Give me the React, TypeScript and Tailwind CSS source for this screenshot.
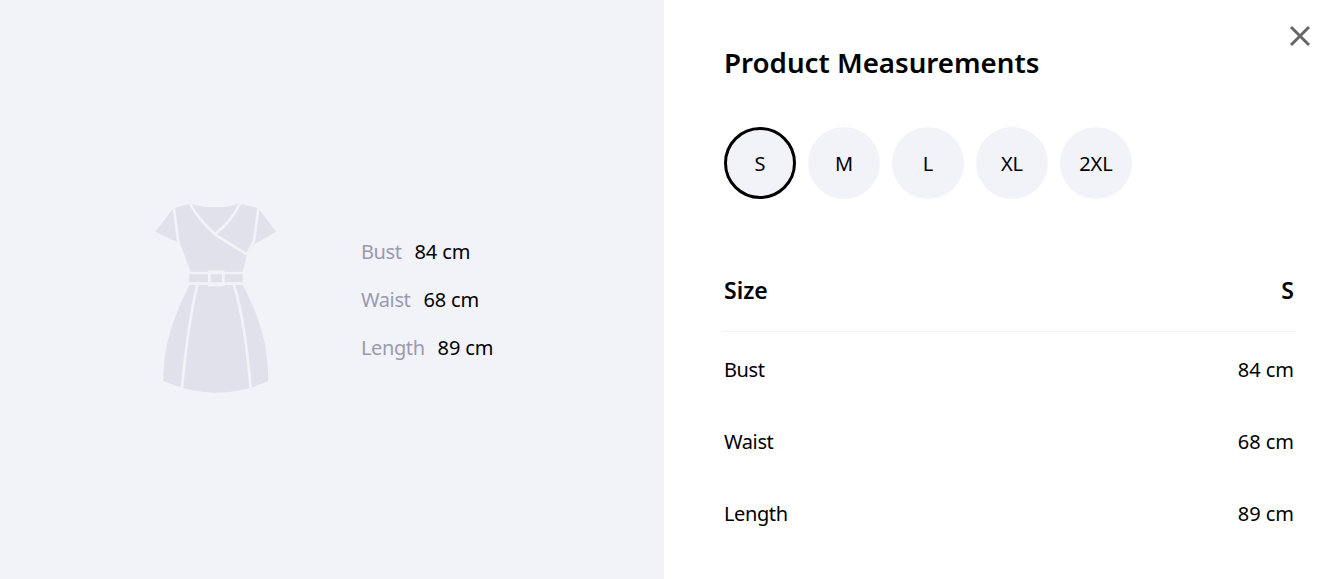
const sizes = ["S", "M", "L", "XL", "2XL"];
const specs = [
  { label: "Bust", value: "84 cm" },
  { label: "Waist", value: "68 cm" },
  { label: "Length", value: "89 cm" },
];

const Dress = () => (
  <svg width="170" height="230" viewBox="0 0 510 690" className="shrink-0">
    <path
      d="M130 82 L180 68 Q255 90 330 68 L385 82 L438 152 L375 188 L350 225 L338 272 L338 312 C380 390 415 480 415 600 Q260 670 100 600 C100 480 140 390 178 312 L178 272 L145 185 L76 152 Z"
      fill="#e0e1ea"
    />
    <g fill="none" stroke="#f2f3f8" strokeWidth="8">
      <path d="M132 82 L145 185 L178 272" />
      <path d="M385 82 L372 180 L350 222" />
      <path d="M180 68 Q205 115 255 160 L350 220" />
      <path d="M330 68 Q305 120 255 160" />
      <path d="M170 276 L346 276" />
      <path d="M170 308 L346 308" />
      <path d="M202 312 Q175 420 155 628" />
      <path d="M312 312 Q345 420 362 622" />
      <rect x="238" y="272" width="42" height="40" />
    </g>
  </svg>
);

export default function App() {
  return (
    <div className="flex h-[579px] w-[1332px] overflow-hidden bg-white font-['Noto_Sans',sans-serif] text-[20px] text-black">
      <div className="flex w-[664px] items-center bg-[#f2f3f8] pl-[130px] pt-[12px]">
        <Dress />
        <div className="ml-[61px] mt-[8px] flex flex-col gap-[18px]">
          {specs.map((s) => (
            <div key={s.label} className="flex h-[30px] items-center gap-[13px]">
              <span className="tracking-[-0.4px] text-[#9a9aae]">{s.label}</span>
              <span className="tracking-[-0.15px]">{s.value}</span>
            </div>
          ))}
        </div>
      </div>
      <div className="relative flex-1 pl-[58px] pr-[36px]">
        <button className="absolute right-[20px] top-[24px]">
          <svg width="24" height="24" viewBox="0 0 24 24" fill="none" stroke="#666666" strokeWidth="3">
            <path d="M3 3 L21 21 M21 3 L3 21" />
          </svg>
        </button>
        <h1 className="ml-[2px] mt-[41px] h-[42px] text-[27.7px] font-semibold leading-[42px]">Product Measurements</h1>
        <div className="ml-[2px] mt-[44px] flex gap-[12px]">
          {sizes.map((s, i) => (
            <div
              key={s}
              className={`flex h-[72px] w-[72px] items-center justify-center rounded-full bg-[#f2f3f8] pt-[2px] ${i === 0 ? "border-[3px] border-black" : ""}`}
            >
              {s}
            </div>
          ))}
        </div>
        <div className="mt-[56px] flex h-[77px] items-center justify-between border-b border-[#f0f1f4] px-[2px] pb-[6px] text-[23px] font-semibold">
          <span>Size</span>
          <span>S</span>
        </div>
        <div className="pt-[2px]">
          {specs.map((s) => (
            <div key={s.label} className="flex h-[72px] items-center justify-between px-[2px]">
              <span className="tracking-[-0.4px]">{s.label}</span>
              <span className="tracking-[-0.05px]">{s.value}</span>
            </div>
          ))}
        </div>
      </div>
    </div>
  );
}
